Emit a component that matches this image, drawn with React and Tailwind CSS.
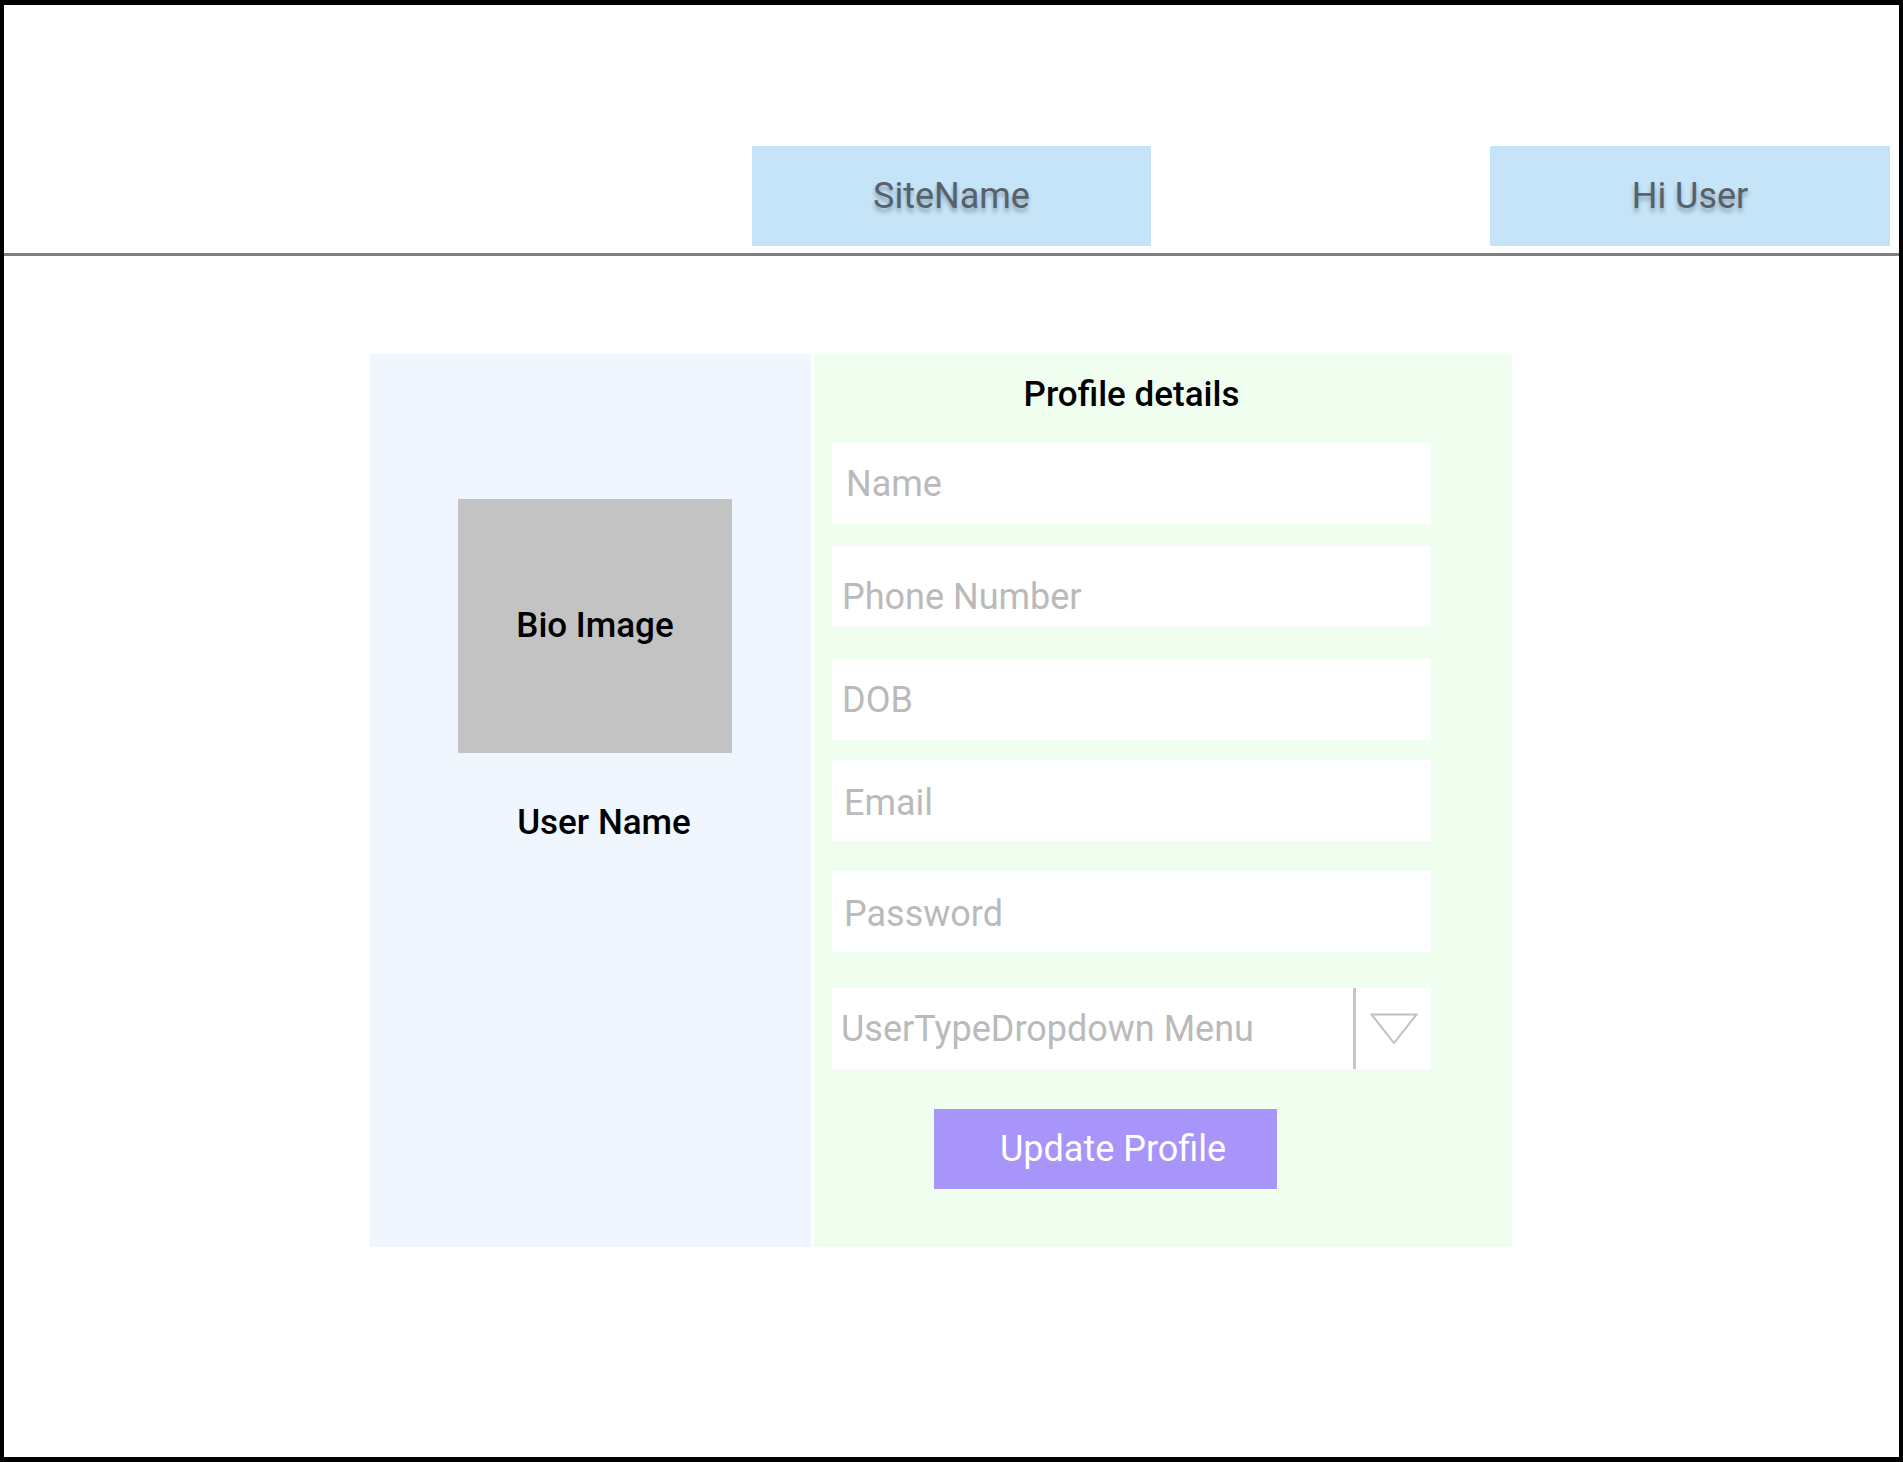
import React from "react";

const fieldClass =
  "block w-[599px] h-[81px] bg-white text-[36px] text-[#333] placeholder:text-[#bababa] outline-none";

const App = () => {
  return (
    <div
      className="w-[1903px] h-[1462px] bg-white border-black border-t-[5px] border-b-[5px] border-l-[4px] border-r-[4px] overflow-hidden"
      style={{ fontFamily: "Roboto, 'Liberation Sans', sans-serif" }}
    >
      {/* Header */}
      <header className="h-[251px] border-b-[3px] border-[#808080] flex items-start">
        <div className="ml-[748px] mt-[141px] w-[399px] h-[100px] bg-[#c5e4f8] flex items-center justify-center">
          <span className="text-[36px] text-[#56616c] [text-shadow:0_4px_4px_rgba(0,0,0,0.3)]">
            SiteName
          </span>
        </div>
        <div className="ml-[339px] mt-[141px] w-[400px] h-[100px] bg-[#c5e4f8] flex items-center justify-center">
          <span className="text-[36px] text-[#56616c] [text-shadow:0_4px_4px_rgba(0,0,0,0.3)]">
            Hi User
          </span>
        </div>
      </header>

      {/* Profile card */}
      <main className="mt-[98px] ml-[366px] flex gap-[3px]">
        {/* Left: bio */}
        <section className="w-[441px] h-[893px] bg-[#eff6fe]">
          <div className="ml-[88px] mt-[145px] w-[274px] h-[254px] bg-[#c3c3c3] flex items-center justify-center">
            <span className="text-[35px] font-medium text-black">Bio Image</span>
          </div>
          <p className="ml-[97px] mt-[50px] w-[274px] text-center text-[35px] font-medium leading-[40px] text-black">
            User Name
          </p>
        </section>

        {/* Right: form */}
        <section className="w-[698px] h-[893px] bg-[#f0fef0] pl-[18px]">
          <h2 className="w-[599px] mt-[21px] text-center text-[35px] font-medium leading-[40px] text-black">
            Profile details
          </h2>

          <input className={`${fieldClass} mt-[28px] pl-[14px]`} placeholder="Name" />
          <input className={`${fieldClass} mt-[22px] pl-[10px] pt-[20px]`} placeholder="Phone Number" />
          <input className={`${fieldClass} mt-[32px] pl-[10px]`} placeholder="DOB" />
          <input className={`${fieldClass} mt-[20px] pl-[12px] pt-[4px]`} placeholder="Email" />
          <input className={`${fieldClass} mt-[30px] pl-[12px] pt-[4px]`} placeholder="Password" type="text" />

          {/* Dropdown */}
          <div className="mt-[36px] w-[599px] h-[81px] bg-white flex items-center">
            <span className="flex-1 pl-[9px] text-[36px] text-[#bababa] whitespace-nowrap">
              UserTypeDropdown Menu
            </span>
            <div className="w-[3px] h-full bg-[#c6c6c6]" />
            <div className="w-[75px] h-full flex items-center justify-center">
              <svg width="48" height="32" viewBox="0 0 48 32" fill="none">
                <path d="M1.5 1.5 H46.5 L24 30 Z" stroke="#c0c0c0" strokeWidth="2" strokeLinejoin="miter" />
              </svg>
            </div>
          </div>

          <button className="mt-[40px] ml-[102px] w-[343px] h-[80px] bg-[#a795f9] text-white text-[36px] pl-[15px] flex items-center justify-center">
            Update Profile
          </button>
        </section>
      </main>
    </div>
  );
};

export default App;
